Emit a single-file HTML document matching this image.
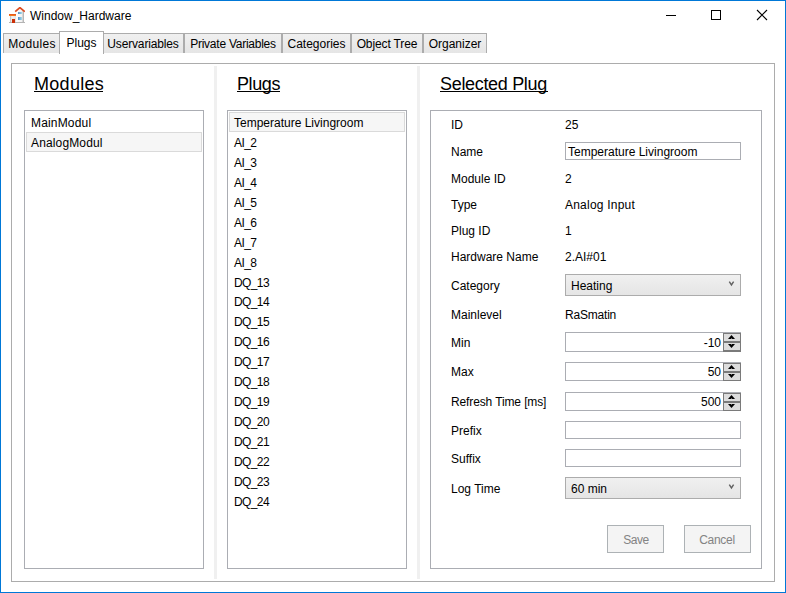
<!DOCTYPE html>
<html><head><meta charset="utf-8">
<style>
html,body{margin:0;padding:0;background:#fff;}
body{width:786px;height:593px;overflow:hidden;position:relative;font-family:"Liberation Sans",sans-serif;color:#000;}
.a{position:absolute;}
.t{position:absolute;font-size:12px;line-height:16px;white-space:nowrap;}
.bx{position:absolute;box-sizing:border-box;}
.win{left:0;top:0;width:786px;height:593px;border:1px solid #0078d7;}
.tab{position:absolute;box-sizing:border-box;top:33px;height:20px;border:1px solid #acacac;border-bottom:none;background:linear-gradient(#f0f0f0,#e5e5e5);font-size:12px;line-height:16px;text-align:center;white-space:nowrap;}
.tab span{position:absolute;left:0;right:0;top:2px;}
.sel{top:31px;height:23px;background:#fff;z-index:2;}
.sel span{top:3px;}
.lb{border:1px solid #abadb3;background:#fff;}
.si{border:1px solid #dadada;background:#f6f6f6;}
.hd{position:absolute;font-size:18px;line-height:22px;white-space:nowrap;}
.ul{position:absolute;height:1px;background:#000;}
.tb{border:1px solid #abadb3;background:#fff;}
.cb{border:1px solid #acacac;background:linear-gradient(#f0f0f0,#e5e5e5);}
.btn{border:1px solid #adb2b5;background:#f4f4f4;color:#838383;font-size:12px;line-height:16px;text-align:center;}
.split{position:absolute;width:3px;background:#f0f0f0;top:66px;height:513px;}
</style></head><body>
<div class="bx win"></div>

<!-- title bar -->
<svg class="a" style="left:9px;top:7px" width="16" height="16" viewBox="0 0 16 16">
  <defs>
    <linearGradient id="gw" x1="0" x2="1" y1="0" y2="0"><stop offset="0" stop-color="#4f8cc4"/><stop offset="1" stop-color="#a9deee"/></linearGradient>
    <linearGradient id="gb" x1="0" x2="1" y1="0" y2="0"><stop offset="0" stop-color="#ffffff"/><stop offset="0.7" stop-color="#f2f2f2"/><stop offset="1" stop-color="#a8a8a8"/></linearGradient>
    <linearGradient id="gg" x1="0" x2="1" y1="0" y2="0"><stop offset="0" stop-color="#b8b8b8"/><stop offset="0.3" stop-color="#f4f4f4"/><stop offset="1" stop-color="#e4e4e4"/></linearGradient>
    <linearGradient id="gr" x1="0" x2="0" y1="0" y2="1"><stop offset="0" stop-color="#e24a1c"/><stop offset="1" stop-color="#f7861f"/></linearGradient>
  </defs>
  <rect x="0" y="15" width="16" height="1" fill="#b4b4b4"/>
  <rect x="1" y="9" width="6" height="6" fill="url(#gg)"/>
  <rect x="0" y="7" width="7" height="2" fill="url(#gr)"/>
  <rect x="3" y="12" width="3" height="4" fill="#cc2e06"/>
  <path d="M7 4.5 L11 1.2 L15 4.5 V15 H7Z" fill="url(#gb)"/>
  <path d="M6.2 4.6 L10.9 0.6 L15.8 4.7" fill="none" stroke="#dc4a1e" stroke-width="1.7" stroke-linejoin="round"/>
  <rect x="9" y="5" width="4" height="2" fill="url(#gw)"/>
  <rect x="9" y="10" width="4" height="3" fill="url(#gw)"/>
</svg>
<div class="t" style="left:30px;top:8px;">Window_Hardware</div>
<div class="a" style="left:666px;top:15px;width:10px;height:1px;background:#000"></div>
<div class="bx" style="left:711px;top:10px;width:10px;height:10px;border:1px solid #000"></div>
<svg class="a" style="left:756px;top:9px" width="12" height="12" viewBox="0 0 12 12">
  <path d="M1 1 L11 11 M11 1 L1 11" stroke="#000" stroke-width="1.1" fill="none"/>
</svg>

<!-- tabs -->
<div class="tab" style="left:3px;width:58px;"><span style="letter-spacing:0.3px">Modules</span></div>
<div class="tab sel" style="left:59px;width:45px;"><span>Plugs</span></div>
<div class="tab" style="left:102px;width:82px;"><span style="letter-spacing:-0.15px">Uservariables</span></div>
<div class="tab" style="left:184px;width:98px;"><span style="letter-spacing:-0.25px">Private Variables</span></div>
<div class="tab" style="left:282px;width:69px;"><span>Categories</span></div>
<div class="tab" style="left:351px;width:72px;"><span style="letter-spacing:-0.12px">Object Tree</span></div>
<div class="tab" style="left:423px;width:64px;"><span>Organizer</span></div>

<!-- outer box -->
<div class="bx" style="left:11px;top:63px;width:764px;height:519px;border:1px solid #acacac;"></div>
<div class="split" style="left:214px"></div>
<div class="split" style="left:417px"></div>

<!-- headers -->
<div class="hd" style="left:34px;top:73px;letter-spacing:0.3px;">Modules</div>
<div class="ul" style="left:34px;top:91px;width:69px;"></div>
<div class="hd" style="left:237px;top:73px;letter-spacing:-0.4px;">Plugs</div>
<div class="ul" style="left:237px;top:91px;width:43px;"></div>
<div class="hd" style="left:440px;top:73px;letter-spacing:-0.32px;">Selected Plug</div>
<div class="ul" style="left:440px;top:91px;width:108px;"></div>

<!-- modules list -->
<div class="bx lb" style="left:24px;top:110px;width:180px;height:459px;"></div>
<div class="bx si" style="left:26px;top:132px;width:176px;height:20px;"></div>
<div class="t" style="left:31px;top:115px;letter-spacing:0.17px;">MainModul</div>
<div class="t" style="left:31px;top:135px;letter-spacing:0.14px;">AnalogModul</div>

<!-- plugs list -->
<div class="bx lb" style="left:227px;top:110px;width:180px;height:459px;"></div>
<div class="bx si" style="left:229px;top:112px;width:176px;height:20px;"></div>
<div class="t" style="left:234px;top:115px;">Temperature Livingroom</div>
<div class="t" style="left:234px;top:135px;letter-spacing:-0.6px;">AI_2</div>
<div class="t" style="left:234px;top:155px;letter-spacing:-0.6px;">AI_3</div>
<div class="t" style="left:234px;top:175px;letter-spacing:-0.6px;">AI_4</div>
<div class="t" style="left:234px;top:195px;letter-spacing:-0.6px;">AI_5</div>
<div class="t" style="left:234px;top:215px;letter-spacing:-0.6px;">AI_6</div>
<div class="t" style="left:234px;top:235px;letter-spacing:-0.6px;">AI_7</div>
<div class="t" style="left:234px;top:255px;letter-spacing:-0.6px;">AI_8</div>
<div class="t" style="left:234px;top:275px;letter-spacing:-0.6px;">DQ_13</div>
<div class="t" style="left:234px;top:294px;letter-spacing:-0.6px;">DQ_14</div>
<div class="t" style="left:234px;top:314px;letter-spacing:-0.6px;">DQ_15</div>
<div class="t" style="left:234px;top:334px;letter-spacing:-0.6px;">DQ_16</div>
<div class="t" style="left:234px;top:354px;letter-spacing:-0.6px;">DQ_17</div>
<div class="t" style="left:234px;top:374px;letter-spacing:-0.6px;">DQ_18</div>
<div class="t" style="left:234px;top:394px;letter-spacing:-0.6px;">DQ_19</div>
<div class="t" style="left:234px;top:414px;letter-spacing:-0.6px;">DQ_20</div>
<div class="t" style="left:234px;top:434px;letter-spacing:-0.6px;">DQ_21</div>
<div class="t" style="left:234px;top:454px;letter-spacing:-0.6px;">DQ_22</div>
<div class="t" style="left:234px;top:474px;letter-spacing:-0.6px;">DQ_23</div>
<div class="t" style="left:234px;top:494px;letter-spacing:-0.6px;">DQ_24</div>

<!-- selected plug -->
<div class="bx lb" style="left:430px;top:110px;width:332px;height:459px;"></div>

<div class="t" style="left:451px;top:117px;">ID</div>
<div class="t" style="left:565px;top:117px;">25</div>

<div class="t" style="left:451px;top:144px;">Name</div>
<div class="bx tb" style="left:565px;top:142px;width:176px;height:18px;"></div>
<div class="t" style="left:568px;top:144px;">Temperature Livingroom</div>

<div class="t" style="left:451px;top:171px;">Module ID</div>
<div class="t" style="left:565px;top:171px;">2</div>

<div class="t" style="left:451px;top:197px;">Type</div>
<div class="t" style="left:565px;top:197px;letter-spacing:0.22px;">Analog Input</div>

<div class="t" style="left:451px;top:223px;">Plug ID</div>
<div class="t" style="left:565px;top:223px;">1</div>

<div class="t" style="left:451px;top:249px;">Hardware Name</div>
<div class="t" style="left:565px;top:249px;">2.AI#01</div>

<div class="t" style="left:451px;top:278px;">Category</div>
<div class="bx cb" style="left:565px;top:274px;width:176px;height:22px;"></div>
<div class="t" style="left:571px;top:278px;">Heating</div>
<svg class="a" style="left:728px;top:280px" width="8" height="8" viewBox="0 0 8 8"><path d="M1.3 1.7 L3.45 5.0 L5.6 1.7" fill="none" stroke="#606060" stroke-width="1.4"/></svg>

<div class="t" style="left:451px;top:307px;">Mainlevel</div>
<div class="t" style="left:565px;top:307px;letter-spacing:-0.2px;">RaSmatin</div>

<div class="t" style="left:451px;top:335px;">Min</div>
<div class="bx tb" style="left:565px;top:332px;width:176px;height:20px;"></div>
<div class="t" style="left:565px;top:335px;width:156px;text-align:right;">-10</div>
<div class="a" style="left:723px;top:333px;width:18px;height:19px;background:#7a7a7a;"></div>
<div class="a" style="left:724px;top:334px;width:16px;height:7px;background:#dddddd;"></div>
<div class="a" style="left:724px;top:343px;width:16px;height:7px;background:#dddddd;"></div>
<svg class="a" style="left:728px;top:335px" width="7" height="4" viewBox="0 0 7 4"><path d="M0 4 L3.5 0 L7 4 L4.2 4 L3.5 3.2 L2.8 4Z" fill="#000"/></svg>
<svg class="a" style="left:728px;top:344px" width="7" height="4" viewBox="0 0 7 4"><path d="M0 0 L3.5 4 L7 0 L4.2 0 L3.5 0.8 L2.8 0Z" fill="#000"/></svg>

<div class="t" style="left:451px;top:364px;">Max</div>
<div class="bx tb" style="left:565px;top:362px;width:176px;height:19px;"></div>
<div class="t" style="left:565px;top:364px;width:156px;text-align:right;">50</div>
<div class="a" style="left:723px;top:363px;width:18px;height:18px;background:#7a7a7a;"></div>
<div class="a" style="left:724px;top:364px;width:16px;height:7px;background:#dddddd;"></div>
<div class="a" style="left:724px;top:373px;width:16px;height:7px;background:#dddddd;"></div>
<svg class="a" style="left:728px;top:365px" width="7" height="4" viewBox="0 0 7 4"><path d="M0 4 L3.5 0 L7 4 L4.2 4 L3.5 3.2 L2.8 4Z" fill="#000"/></svg>
<svg class="a" style="left:728px;top:374px" width="7" height="4" viewBox="0 0 7 4"><path d="M0 0 L3.5 4 L7 0 L4.2 0 L3.5 0.8 L2.8 0Z" fill="#000"/></svg>

<div class="t" style="left:451px;top:394px;letter-spacing:-0.12px;">Refresh Time [ms]</div>
<div class="bx tb" style="left:565px;top:392px;width:176px;height:19px;"></div>
<div class="t" style="left:565px;top:394px;width:156px;text-align:right;">500</div>
<div class="a" style="left:723px;top:393px;width:18px;height:18px;background:#7a7a7a;"></div>
<div class="a" style="left:724px;top:394px;width:16px;height:7px;background:#dddddd;"></div>
<div class="a" style="left:724px;top:403px;width:16px;height:7px;background:#dddddd;"></div>
<svg class="a" style="left:728px;top:395px" width="7" height="4" viewBox="0 0 7 4"><path d="M0 4 L3.5 0 L7 4 L4.2 4 L3.5 3.2 L2.8 4Z" fill="#000"/></svg>
<svg class="a" style="left:728px;top:404px" width="7" height="4" viewBox="0 0 7 4"><path d="M0 0 L3.5 4 L7 0 L4.2 0 L3.5 0.8 L2.8 0Z" fill="#000"/></svg>

<div class="t" style="left:451px;top:423px;">Prefix</div>
<div class="bx tb" style="left:565px;top:421px;width:176px;height:18px;"></div>

<div class="t" style="left:451px;top:451px;">Suffix</div>
<div class="bx tb" style="left:565px;top:449px;width:176px;height:18px;"></div>

<div class="t" style="left:451px;top:481px;">Log Time</div>
<div class="bx cb" style="left:565px;top:477px;width:176px;height:22px;"></div>
<div class="t" style="left:571px;top:481px;">60 min</div>
<svg class="a" style="left:728px;top:483px" width="8" height="8" viewBox="0 0 8 8"><path d="M1.3 1.7 L3.45 5.0 L5.6 1.7" fill="none" stroke="#606060" stroke-width="1.4"/></svg>

<div class="bx btn" style="left:607px;top:525px;width:57px;height:28px;padding-top:6px;padding-left:1px;letter-spacing:-0.5px;">Save</div>
<div class="bx btn" style="left:684px;top:525px;width:67px;height:28px;padding-top:6px;letter-spacing:-0.3px;padding-right:1px;">Cancel</div>

</body></html>
